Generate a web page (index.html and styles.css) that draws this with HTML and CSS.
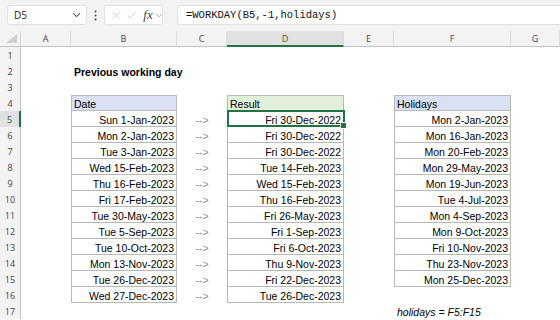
FILE: index.html
```html
<!DOCTYPE html>
<html>
<head>
<meta charset="utf-8">
<link rel="stylesheet" href="styles.css">
</head>
<body>
<div class="fbar">
  <div class="namebox"><span>D5</span>
    <svg width="9" height="6" viewBox="0 0 9 6"><path d="M1 1.2 L4.5 4.6 L8 1.2" fill="none" stroke="#555" stroke-width="1.1"/></svg>
  </div>
  <div class="dots"><svg width="3" height="11" viewBox="0 0 3 11"><circle cx="1.5" cy="1.5" r="1.1" fill="#555"/><circle cx="1.5" cy="5.5" r="1.1" fill="#555"/><circle cx="1.5" cy="9.5" r="1.1" fill="#555"/></svg></div>
  <div class="fxbox">
    <svg class="ico" width="11" height="11" viewBox="0 0 11 11"><path d="M1 1 L10 10 M10 1 L1 10" stroke="#c4c4c4" stroke-width="1"/></svg>
    <svg class="ico" width="12" height="10" viewBox="0 0 12 10"><path d="M1 5.5 L4.2 8.6 L11 1.2" fill="none" stroke="#c4c4c4" stroke-width="1"/></svg>
    <span class="fx">fx</span>
    <svg width="8" height="5" viewBox="0 0 8 5"><path d="M1 1 L4 4 L7 1" fill="none" stroke="#888" stroke-width="1"/></svg>
  </div>
  <div class="formula">=WORKDAY(B5,-1,holidays)</div>
</div>

<div class="sheet">
  <div class="row head">
    <div class="corner"><svg width="11" height="9" viewBox="0 0 11 9"><polygon points="11,0 11,9 0,9" fill="#cfcfcf"/></svg></div>
    <div class="ch">A</div><div class="ch">B</div><div class="ch">C</div><div class="ch on">D</div><div class="ch">E</div><div class="ch">F</div><div class="ch">G</div>
  </div>

  <div class="row"><div class="rh">1</div><div></div><div></div><div></div><div></div><div></div><div></div><div></div></div>
  <div class="row"><div class="rh">2</div><div></div><div class="title">Previous working day</div><div></div><div></div><div></div><div></div><div></div></div>
  <div class="row"><div class="rh">3</div><div></div><div></div><div></div><div></div><div></div><div></div><div></div></div>
  <div class="row"><div class="rh">4</div><div></div><div class="t th">Date</div><div></div><div class="t th green">Result</div><div></div><div class="t th">Holidays</div><div></div></div>

  <div class="row"><div class="rh on">5</div><div></div><div class="t">Sun 1-Jan-2023</div><div class="arr">--&gt;</div><div class="t sel">Fri 30-Dec-2022</div><div></div><div class="t">Mon 2-Jan-2023</div><div></div></div>
  <div class="row"><div class="rh">6</div><div></div><div class="t">Mon 2-Jan-2023</div><div class="arr">--&gt;</div><div class="t">Fri 30-Dec-2022</div><div></div><div class="t">Mon 16-Jan-2023</div><div></div></div>
  <div class="row"><div class="rh">7</div><div></div><div class="t">Tue 3-Jan-2023</div><div class="arr">--&gt;</div><div class="t">Fri 30-Dec-2022</div><div></div><div class="t">Mon 20-Feb-2023</div><div></div></div>
  <div class="row"><div class="rh">8</div><div></div><div class="t">Wed 15-Feb-2023</div><div class="arr">--&gt;</div><div class="t">Tue 14-Feb-2023</div><div></div><div class="t">Mon 29-May-2023</div><div></div></div>
  <div class="row"><div class="rh">9</div><div></div><div class="t">Thu 16-Feb-2023</div><div class="arr">--&gt;</div><div class="t">Wed 15-Feb-2023</div><div></div><div class="t">Mon 19-Jun-2023</div><div></div></div>
  <div class="row"><div class="rh">10</div><div></div><div class="t">Fri 17-Feb-2023</div><div class="arr">--&gt;</div><div class="t">Thu 16-Feb-2023</div><div></div><div class="t">Tue 4-Jul-2023</div><div></div></div>
  <div class="row"><div class="rh">11</div><div></div><div class="t">Tue 30-May-2023</div><div class="arr">--&gt;</div><div class="t">Fri 26-May-2023</div><div></div><div class="t">Mon 4-Sep-2023</div><div></div></div>
  <div class="row"><div class="rh">12</div><div></div><div class="t">Tue 5-Sep-2023</div><div class="arr">--&gt;</div><div class="t">Fri 1-Sep-2023</div><div></div><div class="t">Mon 9-Oct-2023</div><div></div></div>
  <div class="row"><div class="rh">13</div><div></div><div class="t">Tue 10-Oct-2023</div><div class="arr">--&gt;</div><div class="t">Fri 6-Oct-2023</div><div></div><div class="t">Fri 10-Nov-2023</div><div></div></div>
  <div class="row"><div class="rh">14</div><div></div><div class="t">Mon 13-Nov-2023</div><div class="arr">--&gt;</div><div class="t">Thu 9-Nov-2023</div><div></div><div class="t">Thu 23-Nov-2023</div><div></div></div>
  <div class="row"><div class="rh">15</div><div></div><div class="t">Tue 26-Dec-2023</div><div class="arr">--&gt;</div><div class="t">Fri 22-Dec-2023</div><div></div><div class="t">Mon 25-Dec-2023</div><div></div></div>
  <div class="row"><div class="rh">16</div><div></div><div class="t">Wed 27-Dec-2023</div><div class="arr">--&gt;</div><div class="t">Tue 26-Dec-2023</div><div></div><div></div><div></div></div>
  <div class="row"><div class="rh">17</div><div></div><div></div><div></div><div></div><div></div><div class="note">holidays = F5:F15</div><div></div></div>
</div>
</body>
</html>
```

FILE: styles.css
```css
* { box-sizing: border-box; margin: 0; padding: 0; }

body {
  width: 560px;
  height: 320px;
  overflow: hidden;
  background: #ffffff;
  font-family: "Liberation Sans", Arial, sans-serif;
  color: #000;
}

/* formula bar */
.fbar {
  height: 31px;
  background: #f3f3f3;
  display: flex;
  align-items: flex-start;
  padding: 5px 0 0 7px;
}

.namebox {
  width: 80px;
  height: 20px;
  background: #fff;
  border: 1px solid #e2e2e2;
  border-radius: 3px;
  display: flex;
  align-items: center;
  justify-content: space-between;
  padding: 0 5px 0 6px;
  font-family: "Open Sans", sans-serif;
  font-size: 10px;
  color: #222;
}

.dots {
  width: 17px;
  height: 20px;
  display: flex;
  align-items: center;
  justify-content: center;
}

.fxbox {
  width: 59px;
  height: 20px;
  background: #fff;
  border: 1px solid #e2e2e2;
  border-radius: 3px;
  display: flex;
  align-items: center;
  padding-left: 7px;
  gap: 6px;
}

.fx {
  font-family: "Liberation Serif", serif;
  font-style: italic;
  font-size: 13px;
  color: #444;
  margin-left: 1px;
  margin-right: -3px;
}

.formula {
  flex: 1;
  margin-left: 14px;
  height: 20px;
  background: #fff;
  border: 1px solid #e2e2e2;
  border-right: none;
  border-radius: 3px 0 0 3px;
  padding-left: 8px;
  font-family: "Liberation Mono", monospace;
  font-size: 10.5px;
  line-height: 18px;
  color: #111;
}

/* sheet */
.row {
  display: grid;
  grid-template-columns: 21px 50px 106px 50px 117px 50px 117px 49px;
  height: 16px;
  font-size: 10.5px;
  line-height: 16px;
}

.row > div {
  height: 16px;
  padding-top: 1px;
  white-space: nowrap;
}

.row.head {
  height: 16px;
  background: #f3f3f3;
}

.row.head > div {
  height: 16px;
  border-bottom: 1px solid #c2c2c2;
  padding-top: 0;
}

.corner {
  display: flex;
  align-items: flex-end;
  justify-content: flex-end;
  padding: 0 3px 3px 0;
  border-right: 1px solid #d6d6d6;
}

.ch {
  text-align: center;
  font-family: "Open Sans", sans-serif;
  font-size: 9px;
  line-height: 16px;
  color: #444;
  border-right: 1px solid #dcdcdc;
}

.ch.on {
  background: #e1e1e1;
  color: #1e6b3e;
  border-bottom: 2px solid #217346 !important;
}

.rh {
  background: #f3f3f3;
  border-right: 1px solid #c2c2c2;
  text-align: center;
  font-family: "Open Sans", sans-serif;
  font-size: 9px;
  color: #444;
  line-height: 15px;
}

.rh.on {
  background: #e1e1e1;
  color: #1e6b3e;
  border-right: 2px solid #217346;
}

.title {
  font-weight: bold;
  padding-left: 3px;
  overflow: visible;
}

.t {
  border-left: 1px solid #b8b8b8;
  border-right: 1px solid #b8b8b8;
  border-bottom: 1px solid #b8b8b8;
  text-align: right;
  padding-right: 2px;
}

.th {
  border-top: 1px solid #b8b8b8;
  background: #d9e1f2;
  text-align: left;
  padding-left: 2px;
  padding-top: 0 !important;
}

.th.green {
  background: #e2efda;
}

.arr {
  text-align: center;
  color: #8a8a8a;
}

.sel {
  position: relative;
}

.sel::after {
  content: "";
  position: absolute;
  left: -1px;
  top: -1px;
  right: -2px;
  bottom: -1px;
  border: 2px solid #217346;
}

.sel::before {
  content: "";
  position: absolute;
  right: -4px;
  bottom: -3px;
  width: 5px;
  height: 5px;
  background: #217346;
  border: 1px solid #fff;
  z-index: 2;
}

.note {
  font-style: italic;
  padding-left: 3px;
  overflow: visible;
}
```
